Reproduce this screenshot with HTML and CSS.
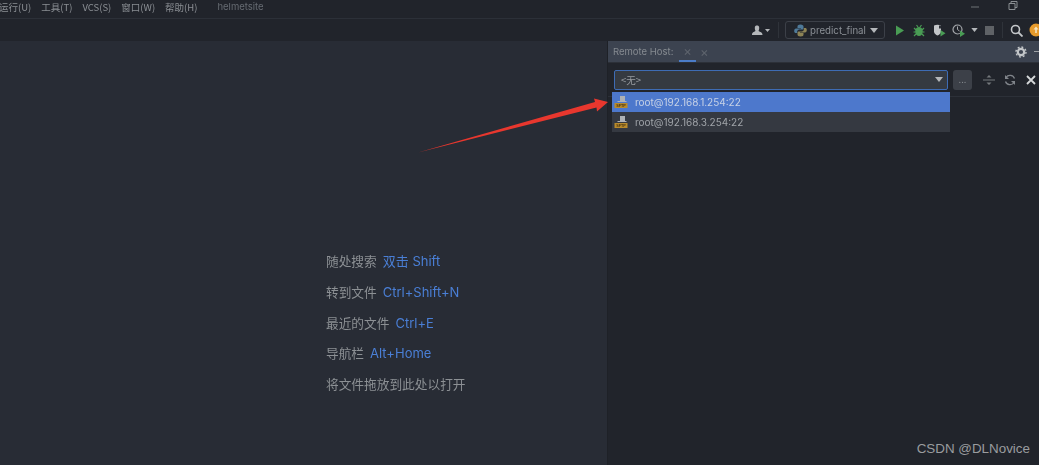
FILE: index.html
```html
<!DOCTYPE html>
<html lang="zh">
<head>
<meta charset="utf-8">
<title>helmetsite</title>
<link rel="stylesheet" href="styles.css">
</head>
<body>
<div class="app">
  <header class="titlebar">
    <nav class="menu"><span class="m1">运行(U)</span><span>工具(T)</span><span>VCS(S)</span><span>窗口(W)</span><span>帮助(H)</span><span class="project">helmetsite</span></nav>
    <div class="winbtns">
      <svg width="12" height="12" viewBox="0 0 12 12"><path d="M2 7h8" stroke="#6e7276" stroke-width="1"/></svg>
      <svg width="12" height="12" viewBox="0 0 12 12"><path d="M2 3.500h6v6h-6z M4 3.500v-2h6v6h-2" fill="none" stroke="#8a8e92" stroke-width="1"/></svg>
    </div>
  </header>
  <div class="toolbar">
    <svg class="user" width="18" height="12" viewBox="0 0 18 12"><path d="M0 11c0-3 2-3 3.500-4C3 6 2.500 4 3 2.500 3.500 1 6.500 1 7 2.500 7.500 4 7 6 6.500 7c1.500 1 4 1 4 4z" fill="#b4b7ba"/><path d="M13 5h5l-2.500 3z" fill="#b4b7ba"/></svg>
    <div class="sep"></div>
    <div class="runconfig">
      <svg width="13" height="13" viewBox="0 0 13 13"><path d="M6.500 .5c-2.500 0-3 1-3 2v1.500h3.500v.5H2c-1.200 0-1.800 1-1.800 2.500S.8 9 2 9h1.200V7.500c0-1 1-2 2-2h3c.8 0 1.300-.6 1.300-1.300V2.500c0-1-1-2-3-2z" fill="#4f7a99"/><path d="M6.500 12.500c2.500 0 3-1 3-2V9H6v-.5h5c1.200 0 1.800-1 1.800-2.500S12.200 4 11 4H9.800v1.500c0 1-1 2-2 2h-3c-.8 0-1.300.6-1.300 1.300v1.700c0 1 1 2 3 2z" fill="#8d8356"/></svg>
      <span>predict_final</span>
      <svg width="8" height="5" viewBox="0 0 8 5"><path d="M0 0h8L4 5z" fill="#b4b7ba"/></svg>
    </div>
    <svg class="play" width="10" height="11" viewBox="0 0 10 11"><path d="M1 .5l8 5-8 5z" fill="#499c54"/></svg>
    <svg class="bug" width="12" height="13" viewBox="0 0 12 13"><ellipse cx="6" cy="7.500" rx="3.800" ry="4.500" fill="#499c54"/><path d="M1 4l2 2M11 4L9 6M.5 8h2M11.500 8h-2M1 12l2-2M11 12l-2-2M3.500 1l1.500 2M8.500 1L7 3" stroke="#499c54" stroke-width="1.200"/></svg>
    <svg class="cov" width="13" height="13" viewBox="0 0 13 13"><path d="M1 1.500C3 .5 6 .5 8 1.500v6c0 2-2 3.500-3.500 4C3 11 1 9.500 1 7.500z" fill="#c3c6c9"/><path d="M6 1.500h2v3H6z" fill="#2a2e35"/><path d="M7.500 6l5 3.200-5 3.200z" fill="#499c54"/></svg>
    <svg class="prof" width="14" height="13" viewBox="0 0 14 13"><circle cx="5.500" cy="5.500" r="4.500" fill="none" stroke="#a6a9ad" stroke-width="1.200"/><path d="M5.500 2.500v3l2 1.500" fill="none" stroke="#a6a9ad"/><path d="M8 6.500l5 3.200-5 3.200z" fill="#499c54"/></svg>
    <svg class="caret" width="7" height="4" viewBox="0 0 8 5"><path d="M0 0h8L4 5z" fill="#b4b7ba"/></svg>
    <div class="stop"></div>
    <div class="sep sep2"></div>
    <svg class="search" width="13" height="13" viewBox="0 0 13 13"><circle cx="5.500" cy="5.500" r="4" fill="none" stroke="#c3c6c9" stroke-width="1.600"/><path d="M8.500 8.500l4 4" stroke="#c3c6c9" stroke-width="1.800"/></svg>
    <svg class="update" width="14" height="14" viewBox="0 0 14 14"><circle cx="7" cy="7" r="6.500" fill="#e79b2c"/><path d="M7 3.500L4.500 6.500h1.700V10h1.600V6.500h1.700z" fill="#f6e3bd"/></svg>
  </div>
  <main class="body">
    <section class="editor">
      <ul class="hints">
        <li>随处搜索<b>双击 Shift</b></li>
        <li>转到文件<b>Ctrl+Shift+N</b></li>
        <li>最近的文件<b>Ctrl+E</b></li>
        <li>导航栏<b>Alt+Home</b></li>
        <li>将文件拖放到此处以打开</li>
      </ul>
    </section>
    <aside class="panel">
      <div class="tabs">
        <span class="tabtitle">Remote Host:</span>
        <span class="tab"><i>×</i></span>
        <i class="tabx">×</i>
        <svg class="gear" width="12" height="12" viewBox="0 0 12 12"><circle cx="6" cy="6" r="3.200" fill="none" stroke="#c3c6c9" stroke-width="2.200"/><circle cx="6" cy="6" r="5" fill="none" stroke="#c3c6c9" stroke-width="1.400" stroke-dasharray="1.900 2"/></svg>
        <span class="dash"></span>
      </div>
      <div class="hostbar">
        <div class="combo"><span>&lt;无&gt;</span><svg width="8" height="5" viewBox="0 0 8 5"><path d="M0 0h8L4 5z" fill="#b4b7ba"/></svg></div>
        <div class="more">...</div>
        <svg class="split" width="12" height="12" viewBox="0 0 12 12"><path d="M0 6h12" stroke="#74787c"/><path d="M3.500 3.500h5L6 1zM3.500 8.500h5L6 11z" fill="#74787c"/></svg>
        <svg class="sync" width="12" height="12" viewBox="0 0 12 12"><path d="M10.500 4.500A4.800 4.800 0 0 0 2 3.500M1.500 7.500A4.800 4.800 0 0 0 10 8.500" fill="none" stroke="#80848a" stroke-width="1.300"/><path d="M1 1v4h4zM11 11V7H7z" fill="#80848a"/></svg>
        <svg class="close" width="10" height="10" viewBox="0 0 10 10"><path d="M1 1l8 8M9 1l-8 8" stroke="#d6d8da" stroke-width="1.800"/></svg>
      </div>
      <div class="content">
        <div class="drop">
          <div class="row active"><svg class="sftp" width="14" height="14" viewBox="0 0 14 14"><path d="M6 1h5v5H6zM3.500 6h9v1H3.500z" fill="#aeb1b5"/><path d="M.5 8h13v5H.5z" fill="#b88a2c"/><text x="7" y="12.200" text-anchor="middle" class="sftptxt">SFTP</text></svg><span>root@192.168.1.254:22</span></div>
          <div class="row"><svg class="sftp" width="14" height="14" viewBox="0 0 14 14"><path d="M6 1h5v5H6zM3.500 6h9v1H3.500z" fill="#aeb1b5"/><path d="M.5 8h13v5H.5z" fill="#b88a2c"/><text x="7" y="12.200" text-anchor="middle" class="sftptxt">SFTP</text></svg><span>root@192.168.3.254:22</span></div>
        </div>
      </div>
    </aside>
  </main>
  <svg class="arrow" width="200" height="60" viewBox="0 0 200 60"><path d="M0 55.500L177 5 176 1.500 190 5 179 14.500 178.500 10.500z" fill="#e8372e"/></svg>
  <div class="mark">CSDN @DLNovice</div>
</div>
</body>
</html>
```
FILE: styles.css
```css
* { box-sizing: border-box; }
html, body { margin: 0; height: 100%; overflow: hidden; }
body { background: #282c35; font-family: "Noto Sans CJK SC", "Noto Sans", sans-serif; }
.app { position: relative; width: 1039px; height: 465px; display: flex; flex-direction: column; overflow: hidden; }
.titlebar { height: 19px; background: #21242b; border-bottom: 1px solid #2c3038; display: flex; justify-content: space-between; flex: none; filter: blur(.4px); }
.menu { display: flex; align-items: flex-start; font-size: 9.5px; line-height: 14px; color: #8b8f94; }
.menu span { margin-right: 10px; white-space: nowrap; }
.menu .m1 { margin-left: -1px; }
.menu .project { margin-left: 10px; margin-top: 0; color: #666b72; font-family: "Inter", sans-serif; font-size: 9.5px; }
.winbtns { display: flex; gap: 26px; padding: 0 20px 0 0; align-items: flex-start; }
.toolbar { height: 22px; background: #21242b; display: flex; align-items: center; flex: none; padding-left: 752px; filter: blur(.4px); }
.user { margin-right: 2px; flex: none; }
.sep { width: 1px; height: 16px; background: #2f333a; margin: 0 6px; flex: none; }
.runconfig { width: 100px; height: 18px; border: 1px solid #3c4048; border-radius: 3px; display: flex; align-items: center; gap: 3px; padding: 0 6px 0 8px; font: 9.7px "Inter", "Noto Sans", sans-serif; color: #8b9096; flex: none; }
.runconfig span { flex: 1; white-space: nowrap; }
.play { margin-left: 10px; flex: none; }
.bug { margin-left: 8px; flex: none; }
.cov { margin-left: 8px; flex: none; }
.prof { margin-left: 6px; flex: none; }
.caret { margin-left: 5px; flex: none; }
.stop { width: 9px; height: 9px; background: #5f6266; margin-left: 7px; flex: none; }
.sep2 { margin: 0 7px 0 8px; }
.search { flex: none; }
.update { margin-left: 6px; flex: none; }
.body { flex: 1; display: flex; min-height: 0; filter: blur(.35px); }
.editor { width: 608px; background: #282c35; border-right: 1px solid #1e2127; position: relative; display: flex; flex-direction: column; padding: 208px 0 0 326px; flex: none; }
.hints { list-style: none; margin: 0; padding: 0; display: flex; flex-direction: column; font-size: 12.7px; color: #8c9094; }
.hints li { height: 30.800px; line-height: 24px; white-space: nowrap; }
.hints b { font-weight: 400; color: #4a7fd6; margin-left: 6px; font-family: "Inter", "Noto Sans CJK SC", sans-serif; font-size: 13px; }
.panel { flex: 1; background: #21242b; display: flex; flex-direction: column; min-width: 0; }
.tabs { height: 22px; background: #3c4350; border-bottom: 1px solid #2c3038; display: flex; align-items: center; position: relative; padding-left: 5px; font: 9.5px "Inter", sans-serif; color: #858a90; flex: none; }
.tabtitle { white-space: nowrap; width: 66px; }
.tab { width: 17px; height: 21px; border-bottom: 2px solid #4b7cc8; display: flex; align-items: center; justify-content: center; }
.tabs i { font-style: normal; color: #5e646d; font-size: 13px; }
.tabx { margin-left: 4px; }
.gear { margin-left: auto; margin-right: 7px; }
.dash { width: 5px; height: 1px; background: #9ea2a6; }
.hostbar { height: 34px; display: flex; align-items: center; padding: 0 5px 0 6px; border-bottom: 1px solid #2c3038; flex: none; }
.combo { width: 334px; height: 20px; background: #353a41; border: 1px solid #3e6cb4; border-radius: 2px; display: flex; align-items: center; justify-content: space-between; padding: 0 4px 0 6px; font-size: 9.5px; color: #9a9ea3; flex: none; }
.more { width: 19px; height: 20px; background: #3c4048; border-radius: 3px; margin-left: 5px; font: 9px/20px "Inter", sans-serif; color: #85898e; text-align: center; flex: none; }
.split { margin-left: 11px; flex: none; }
.sync { margin-left: 9px; flex: none; }
.close { margin-left: 10px; flex: none; }
.content { flex: 1; position: relative; }
.drop { position: absolute; left: 4px; top: -5px; width: 338px; height: 40px; background: #353941; }
.row { height: 20px; display: flex; align-items: center; padding-left: 2px; font: 10px "Inter", sans-serif; color: #a0a4a9; }
.row span { margin-left: 7px; white-space: nowrap; }
.row.active { background: #4d78cc; color: #c7d2e6; }
.sftp { flex: none; }
.sftptxt { font: 700 3.8px "Liberation Sans", sans-serif; fill: #4a3510; }
.arrow { position: absolute; left: 418px; top: 97px; }
.mark { position: absolute; right: 9px; top: 441px; font: 13.4px "Liberation Sans", Arial, sans-serif; color: #9a9c9f; }
```
